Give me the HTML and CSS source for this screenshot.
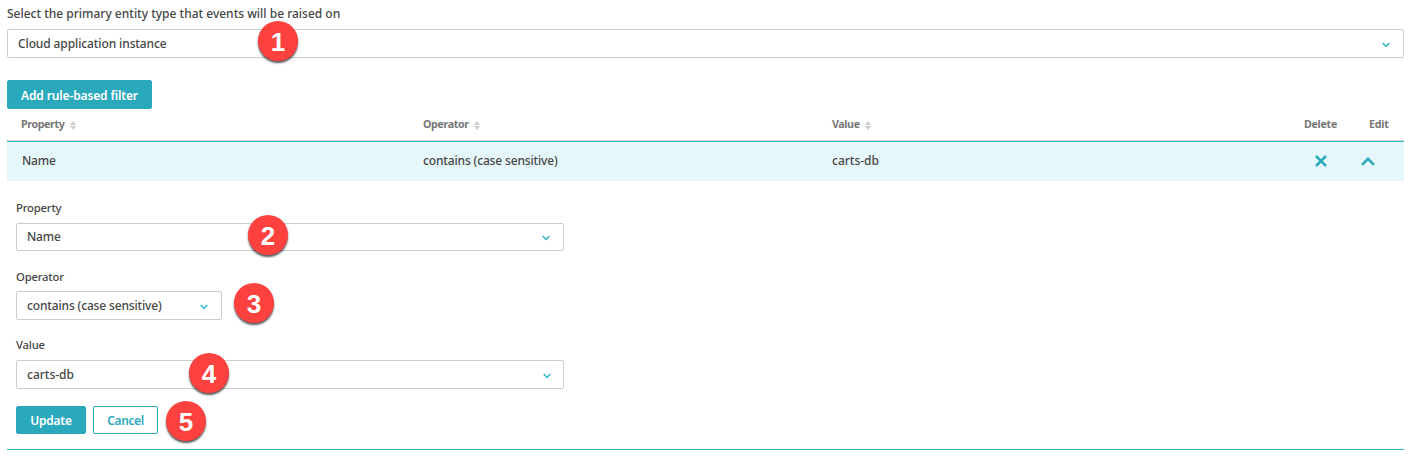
FILE: index.html
```
<!DOCTYPE html>
<html lang="en">
<head>
<meta charset="utf-8">
<title>Rule-based filter</title>
<link rel="stylesheet" href="styles.css">
</head>
<body>
<main class="page">
  <div class="label label-main"><span class="t-select">Select the primary entity type that events will be raised on</span></div>
  <div class="select select-main"><span class="t-cloud">Cloud application instance</span>
    <svg class="chevron" viewBox="0 0 8 6"><path d="M.7 1 4 4.4 7.3 1"/></svg><b class="badge badge-1">1</b></div>
  <button class="btn btn-add"><span class="t-add">Add rule-based filter</span></button>
  <div class="row head">
    <div><span class="t-hprop">Property</span><svg class="sort" viewBox="0 0 6 9"><path d="M3 0 6 4H0zM0 5h6L3 9z"/></svg></div>
    <div><span class="t-hop">Operator</span><svg class="sort" viewBox="0 0 6 9"><path d="M3 0 6 4H0zM0 5h6L3 9z"/></svg></div>
    <div><span class="t-hval">Value</span><svg class="sort" viewBox="0 0 6 9"><path d="M3 0 6 4H0zM0 5h6L3 9z"/></svg></div>
    <div><span class="t-del">Delete</span></div>
    <div><span class="t-edit">Edit</span></div>
  </div>
  <div class="row item">
    <div class="item-name"><span class="t-name">Name</span></div>
    <div><span class="t-contains">contains (case sensitive)</span></div>
    <div><span class="t-carts">carts-db</span></div>
    <div class="delete"><svg class="cross" viewBox="0 0 12 12"><path d="m1 1 10 10M11 1 1 11"/></svg></div>
    <div class="edit"><svg class="caret" viewBox="0 0 14 9"><path d="m1 7.8 6-6 6 6"/></svg></div>
  </div>
  <section class="form">
    <div class="label"><span class="t-prop">Property</span></div>
    <div class="select select-prop"><span class="t-name">Name</span>
      <svg class="chevron" viewBox="0 0 8 6"><path d="M.7 1 4 4.4 7.3 1"/></svg><b class="badge badge-2">2</b></div>
    <div class="label"><span class="t-op">Operator</span></div>
    <div class="select select-op"><span class="t-contains">contains (case sensitive)</span>
      <svg class="chevron" viewBox="0 0 8 6"><path d="M.7 1 4 4.4 7.3 1"/></svg><b class="badge badge-3">3</b></div>
    <div class="label"><span class="t-val">Value</span></div>
    <div class="select select-val"><span class="t-carts">carts-db</span>
      <svg class="chevron" viewBox="0 0 8 6"><path d="M.7 1 4 4.4 7.3 1"/></svg><b class="badge badge-4">4</b></div>
    <div class="actions">
      <button class="btn btn-update"><span class="t-update">Update</span></button>
      <button class="btn btn-cancel"><span class="t-cancel">Cancel</span></button>
      <b class="badge badge-5">5</b>
    </div>
  </section>
</main>
</body>
</html>
```
FILE: styles.css
```
* { box-sizing: border-box; }
body {
  margin: 0;
  background: #fff;
  color: #454646;
  font: 500 12px/16px "Noto Sans", "Open Sans", sans-serif;
}
svg { display: block; flex: none; }
span { white-space: nowrap; }
.page { height: 464px; padding: 6px 14px 0 7px; overflow: hidden; }
.label { height: 16px; font-size: 11.3px; }
.label-main { margin-bottom: 7px; }
.select {
  position: relative;
  display: flex;
  align-items: center;
  justify-content: space-between;
  height: 29px;
  padding: 0 13px 0 10px;
  border: 1px solid #ccc;
  border-radius: 2px;
}
.select-main { margin-bottom: 22px; }
.chevron {
  width: 8px;
  height: 6px;
  margin-top: 2px;
  fill: none;
  stroke: #2ab6c8;
  stroke-width: 1.5;
}
.btn {
  display: flex;
  align-items: center;
  justify-content: center;
  height: 29px;
  margin: 0;
  padding: 1px 0 0;
  border: 1px solid #2ba9bc;
  border-radius: 2px;
  background: #2ba9bc;
  color: #fff;
  font: 600 12px/16px "Noto Sans", "Open Sans", sans-serif;
}
.btn-add { width: 145px; padding-top: 3px; }
.row {
  display: grid;
  grid-template-columns: 402px 409px 472px 65px 1fr;
  align-items: center;
  padding-left: 14px;
}
.row > div { display: flex; align-items: center; }
.head {
  height: 32px;
  padding-bottom: 2px;
  border-bottom: 1px solid #d5d0cf;
  color: #777;
  font-size: 10.7px;
  font-weight: 700;
}
.sort { width: 6px; height: 9px; margin: 3px 0 0 5px; fill: #ccc; }
.item { height: 40px; padding-bottom: 2px; border-top: 1px solid #31bace; background: #e5f7fa; }
.item-name { padding-left: 1px; }
.cross { width: 12px; height: 12px; margin-left: 11px; }
.caret { width: 14px; height: 9px; margin-left: -8px; margin-top: 1px; }
.cross, .caret { fill: none; stroke: #2ba9bc; stroke-width: 2.5; }
.form {
  height: 269px;
  padding: 19px 0 0 9px;
  border-bottom: 1px solid #31bace;
}
.select-prop { width: 548px; height: 28px; margin: 7px 0 18px; }
.select-op { width: 206px; margin: 6px 0 17px; }
.select-val { width: 548px; margin: 7px 0 17px; padding-right: 12px; }
.actions { position: relative; display: flex; gap: 7px; }
.actions .btn { height: 28px; }
.btn-update { width: 70px; }
.btn-cancel { width: 65px; background: #fff; color: #2ba9bc; }

.t-select { font-size: 12px; }
.t-cloud { letter-spacing: -.11px; }
.t-add { letter-spacing: -.14px; }
.t-hprop, .t-hop { letter-spacing: -.38px; }
.t-hval { letter-spacing: -.4px; }
.t-del { letter-spacing: -.3px; }
.t-edit { letter-spacing: -.2px; }
.t-name { letter-spacing: -.2px; }
.t-contains { letter-spacing: -.15px; }
.t-prop, .t-op, .t-val { letter-spacing: -.2px; }
.t-update { letter-spacing: -.2px; }
.t-cancel { letter-spacing: -.4px; }

.badge {
  position: absolute;
  display: flex;
  align-items: center;
  justify-content: center;
  width: 40px;
  height: 40px;
  padding-top: 1px;
  border-radius: 50%;
  background: #fd413f;
  box-shadow: 0 2px 2px rgba(0, 0, 0, .65);
  color: #fff;
  font: 700 26px/40px "Liberation Sans", Arial, sans-serif;
}
.badge-1 { left: 250px; top: -9px; }
.badge-2 { left: 231px; top: -9px; }
.badge-3 { left: 217px; top: -9px; }
.badge-4 { left: 172px; top: -8px; }
.badge-5 { left: 150px; top: -5px; }
```
